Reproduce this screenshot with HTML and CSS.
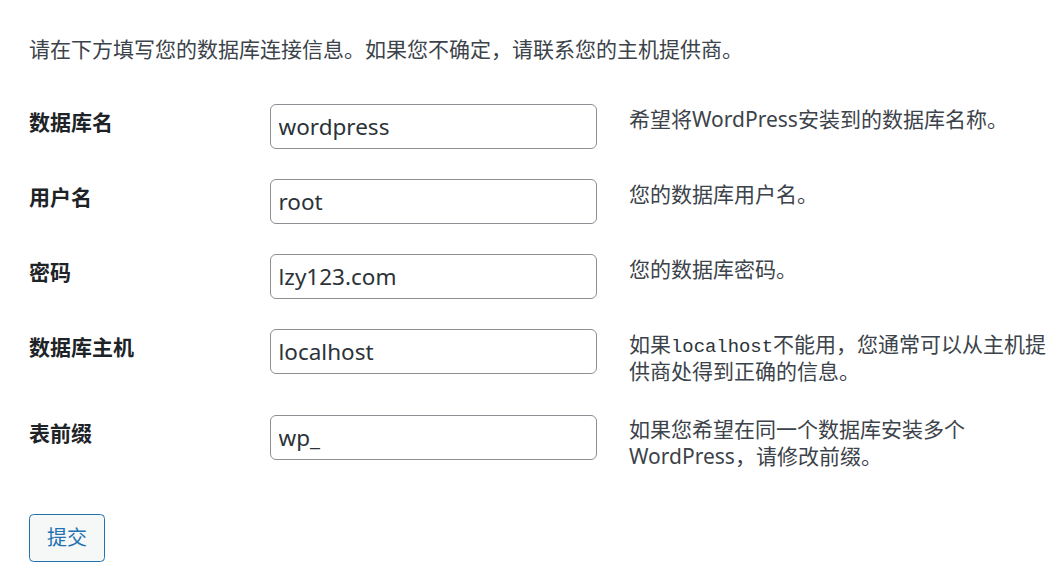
FILE: index.html
```html
<!DOCTYPE html>
<html lang="zh-CN">
<head>
<meta charset="utf-8">
<title>WordPress › 安装配置文件</title>
<link rel="stylesheet" href="styles.css">
</head>
<body>
<main class="setup">
  <p class="intro">请在下方填写您的数据库连接信息。如果您不确定，请联系您的主机提供商。</p>
  <form class="form">
    <div class="row">
      <label class="label" for="dbname">数据库名</label>
      <input class="field" id="dbname" type="text" value="wordpress">
      <div class="desc">希望将WordPress安装到的数据库名称。</div>
    </div>
    <div class="row">
      <label class="label" for="uname">用户名</label>
      <input class="field" id="uname" type="text" value="root">
      <div class="desc">您的数据库用户名。</div>
    </div>
    <div class="row">
      <label class="label" for="pwd">密码</label>
      <input class="field" id="pwd" type="text" value="lzy123.com">
      <div class="desc">您的数据库密码。</div>
    </div>
    <div class="row">
      <label class="label" for="dbhost">数据库主机</label>
      <input class="field" id="dbhost" type="text" value="localhost">
      <div class="desc">如果<code class="code">localhost</code>不能用，您通常可以从主机提供商处得到正确的信息。</div>
    </div>
    <div class="row">
      <label class="label" for="prefix">表前缀</label>
      <input class="field" id="prefix" type="text" value="wp_">
      <div class="desc">如果您希望在同一个数据库安装多个WordPress，请修改前缀。</div>
    </div>
    <div class="actions">
      <button class="button" type="button">提交</button>
    </div>
  </form>
</main>
</body>
</html>
```

FILE: styles.css
```css
html, body {
  margin: 0;
  background: #ffffff;
}

body {
  color: #3c434a;
  font-family: "Noto Sans", "Noto Sans CJK SC", sans-serif;
}

.setup {
  padding-left: 29px;
}

.intro {
  margin: 34px 0 0;
  font-size: 21px;
  line-height: 31.5px;
}

.form {
  margin: 23.5px 0 0;
}

.row {
  display: grid;
  grid-template-columns: 241px 327px 1fr;
  padding: 15px 0;
  align-items: start;
}

.label {
  padding-top: 3px;
  font-size: 21px;
  line-height: 31px;
  font-weight: 700;
  color: #1d2327;
}

.field {
  box-sizing: border-box;
  width: 327px;
  height: 45px;
  margin: 0;
  padding: 0 7.5px;
  border: 1px solid #8c8f94;
  border-radius: 6px;
  background: #ffffff;
  color: #2c3338;
  font-family: "Noto Sans", "Noto Sans CJK SC", sans-serif;
  font-size: 22.5px;
  outline: none;
}

.desc {
  padding: 1.5px 0 0 32px;
  font-size: 21px;
  line-height: 27px;
}

.code {
  font-family: "Liberation Mono", "DejaVu Sans Mono", monospace;
  font-size: 18.9px;
  line-height: 1;
  color: #2c3338;
}

.actions {
  margin-top: 28.5px;
}

.button {
  box-sizing: border-box;
  height: 48px;
  margin: 0;
  padding: 0 17px;
  border: 1px solid #2271b1;
  border-radius: 4.5px;
  background: #f6f7f7;
  color: #2271b1;
  font-family: "Noto Sans", "Noto Sans CJK SC", sans-serif;
  font-size: 20px;
  line-height: 46px;
  cursor: pointer;
}
```
